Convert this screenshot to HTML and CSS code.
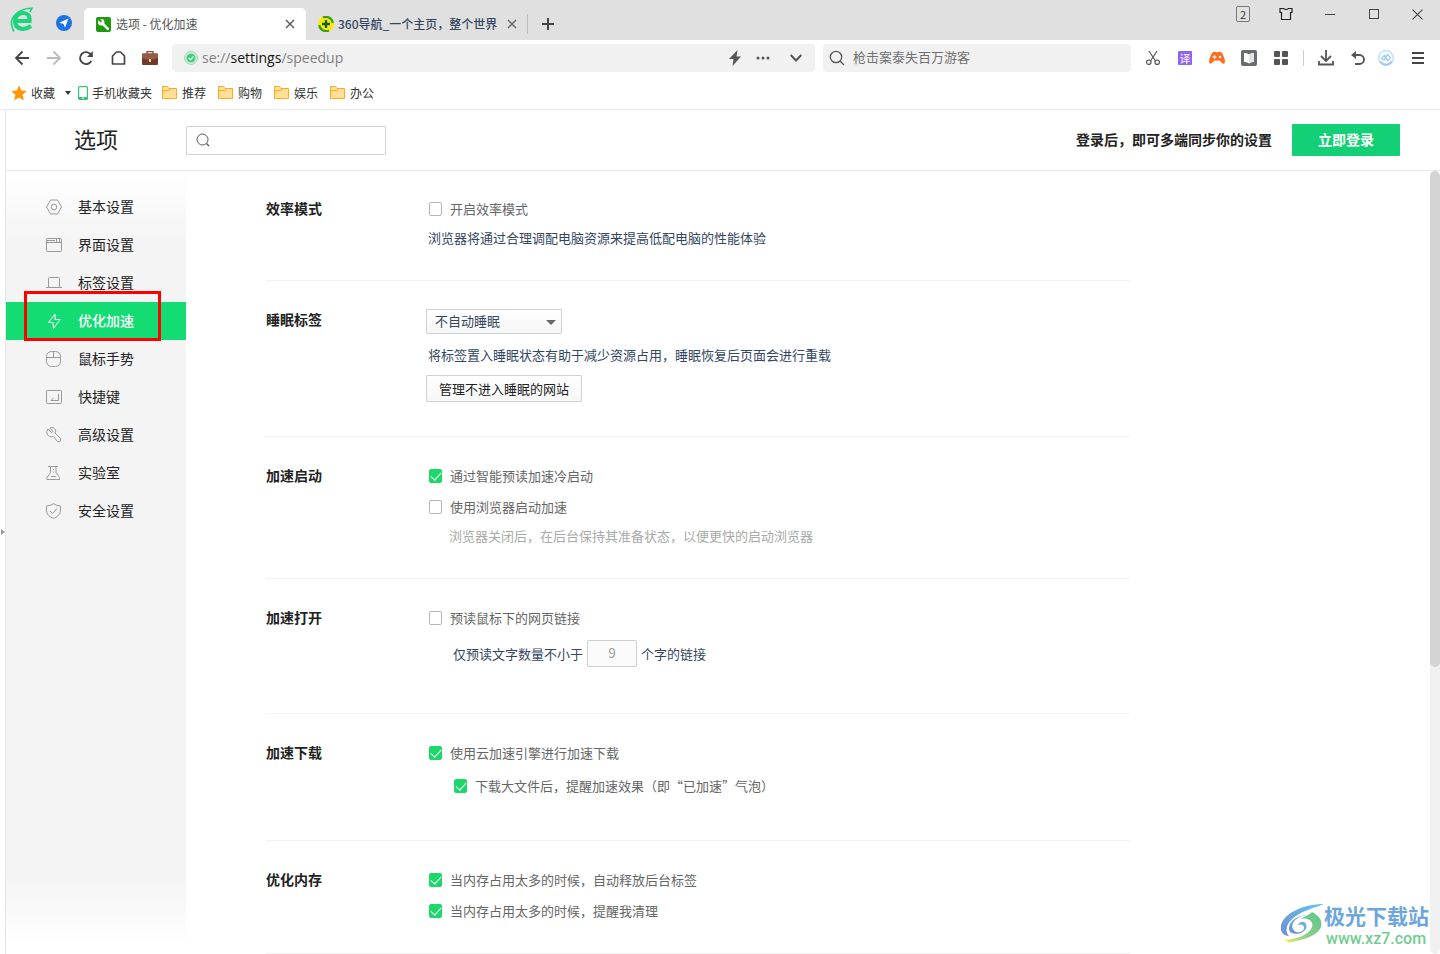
FILE: index.html
```html
<!DOCTYPE html>
<html lang="zh-CN">
<head>
<meta charset="utf-8">
<title>选项 - 优化加速</title>
<link rel="stylesheet" href="styles.css">
</head>
<body>
<div class="tabbar">
  <svg class="logo" viewBox="0 0 24 26" width="24" height="26"><g fill="none" stroke="#1bd47b"><path d="M6 14H19.500C20 8.500 17.500 6 13 6C8.500 6 5 9.500 5 14.500C5.500 22.500 14 24 21 19" stroke-width="4.200"/><path d="M1.500 14C4 6.500 12 1 22 1.200L20 5M1.500 14C1 18 2 21 4 24.500" stroke-width="1.600"/></g></svg>
  <svg class="nav-badge" viewBox="0 0 16 16" width="16" height="16"><circle cx="8" cy="8" r="8" fill="#1a73e8"/><path d="M12.500 3.500L9 12.800L7.500 8.900L3.300 7.800Z" fill="#fff"/></svg>
  <div class="tab tab-active">
    <svg viewBox="0 0 15 15" width="15" height="15"><rect width="15" height="15" rx="2" fill="#21990f"/><path d="M6.500 6.500L11.800 11.800" stroke="#fff" stroke-width="2.600" stroke-linecap="round"/><circle cx="5.200" cy="5.200" r="3.200" fill="#fff"/><path d="M1.500 2.500L3 1L6 4L5 5.500Z" fill="#21990f"/></svg>
    <span class="tab-title">选项 - 优化加速</span>
    <button class="plain" aria-label="关闭标签"><svg viewBox="0 0 10 10" width="10" height="10"><path d="M1 1L9 9M9 1L1 9" stroke="#555" stroke-width="1.400"/></svg></button>
  </div>
  <div class="tab tab-idle">
    <svg viewBox="0 0 16 16" width="16" height="16"><circle cx="8" cy="8" r="8" fill="#ffe711"/><path d="M5 1.500A7 7 0 0 1 14.800 7M11 14.500A7 7 0 0 1 1.200 9" fill="none" stroke="#31a31c" stroke-width="2.200"/><path d="M8 4V12M4 8H12" stroke="#125f12" stroke-width="2.300"/></svg>
    <span class="tab-title">360导航_一个主页，整个世界</span>
    <button class="plain" aria-label="关闭标签"><svg viewBox="0 0 10 10" width="10" height="10"><path d="M1 1L9 9M9 1L1 9" stroke="#666" stroke-width="1.400"/></svg></button>
  </div>
  <button class="plain new-tab" aria-label="新建标签"><svg viewBox="0 0 12 12" width="12" height="12"><path d="M6 0V12M0 6H12" stroke="#444" stroke-width="2"/></svg></button>
  <div class="window-controls">
    <button class="plain count">2</button>
    <button class="plain" aria-label="皮肤"><svg viewBox="0 0 14 14" width="14" height="14"><path d="M1 1.500H4.500Q7 3.500 9.500 1.500H13V5.500H11.500V12.500H2.500V5.500H1Z" fill="none" stroke="#222" stroke-width="1.200"/></svg></button>
    <button class="plain" aria-label="最小化"><svg viewBox="0 0 10 10" width="10" height="10"><path d="M0 5.500H10" stroke="#444"/></svg></button>
    <button class="plain" aria-label="最大化"><svg viewBox="0 0 10 10" width="10" height="10"><rect x=".5" y=".5" width="9" height="9" fill="none" stroke="#444"/></svg></button>
    <button class="plain" aria-label="关闭"><svg viewBox="0 0 10 10" width="11" height="11"><path d="M.5 .5L9.500 9.500M9.500 .5L.5 9.500" stroke="#444"/></svg></button>
  </div>
</div>

<div class="toolbar">
  <div class="nav-buttons">
    <button class="plain" aria-label="后退"><svg viewBox="0 0 16 16" width="16" height="16"><path d="M15 8H2M8.500 1.500L2 8L8.500 14.500" fill="none" stroke="#444" stroke-width="1.800"/></svg></button>
    <button class="plain" aria-label="前进"><svg viewBox="0 0 16 16" width="16" height="16"><path d="M1 8H14M7.500 1.500L14 8L7.500 14.500" fill="none" stroke="#bbb" stroke-width="1.800"/></svg></button>
    <button class="plain" aria-label="刷新"><svg viewBox="0 0 16 16" width="16" height="16"><path d="M13.300 11A6 6 0 1 1 13 4.700" fill="none" stroke="#444" stroke-width="1.900"/><path d="M14.800 1V7H9Z" fill="#444"/></svg></button>
    <button class="plain" aria-label="主页"><svg viewBox="0 0 16 16" width="16" height="16"><path d="M2.500 6L6.500 2H10.500L14.500 6V14H2.500Z" fill="none" stroke="#444" stroke-width="1.700" stroke-linejoin="round"/></svg></button>
    <button class="plain" aria-label="工具箱"><svg viewBox="0 0 16 16" width="16" height="16"><path d="M5 4V1.700H11V4" fill="none" stroke="#8c4a3a" stroke-width="1.300"/><rect y="3.500" width="16" height="11.500" rx="1" fill="#71382c"/><path d="M0 4.500Q0 3.500 1 3.500H15Q16 3.500 16 4.500V8Q8 11 0 8Z" fill="#98594a"/><rect x="7" y="9" width="2" height="3" fill="#ffd878"/></svg></button>
  </div>
  <div class="address">
    <svg viewBox="0 0 14 14" width="14" height="14"><circle cx="7" cy="7" r="6.300" fill="none" stroke="#75dda0"/><circle cx="7" cy="7" r="4.600" fill="#45cf7b"/><path d="M4.800 7L6.500 8.700L9.500 5.500" fill="none" stroke="#fff" stroke-width="1.200"/></svg>
    <span class="url">se://<b>settings</b>/speedup</span>
    <button class="plain" aria-label="极速模式"><svg viewBox="0 0 12 16" width="12" height="16"><path d="M8.500 0L0 9H4.500L3.500 16L12 6.500H7.500Z" fill="#555"/></svg></button>
    <button class="plain" aria-label="更多"><svg viewBox="0 0 14 4" width="14" height="4"><g fill="#555"><circle cx="2" cy="2" r="1.500"/><circle cx="7" cy="2" r="1.500"/><circle cx="12" cy="2" r="1.500"/></g></svg></button>
    <button class="plain" aria-label="展开"><svg viewBox="0 0 12 8" width="12" height="8"><path d="M.7 1L6 6.500L11.300 1" fill="none" stroke="#555" stroke-width="2"/></svg></button>
  </div>
  <label class="websearch">
    <svg viewBox="0 0 16 16" width="16" height="16"><circle cx="7" cy="7" r="5.700" fill="none" stroke="#555" stroke-width="1.300"/><path d="M11 11L15 15" stroke="#555" stroke-width="1.300"/></svg>
    <input type="text" placeholder="枪击案泰失百万游客" aria-label="搜索">
  </label>
  <div class="tools">
    <button class="plain" aria-label="截图"><svg viewBox="0 0 16 16" width="16" height="16"><g fill="none" stroke="#555" stroke-width="1.200"><path d="M4 1L10.500 11M12 1L5.500 11"/><circle cx="3.800" cy="12.200" r="2.200"/><circle cx="12.200" cy="12.200" r="2.200"/></g></svg></button>
    <button class="plain translate">译</button>
    <button class="plain" aria-label="游戏"><svg viewBox="0 0 16 14" width="16" height="14"><path d="M3 2Q5 0 8 1.500Q11 0 13 2Q16 7 16 11Q15.500 14 13 12L10.500 9.500H5.500L3 12Q.5 14 0 11Q0 7 3 2Z" fill="#fb6e1c"/><path d="M5.500 4V8M3.500 6H7.500" stroke="#fff" stroke-width="1.200"/><circle cx="11" cy="6" r="1.200" fill="#fff"/></svg></button>
    <button class="plain" aria-label="阅读"><svg viewBox="0 0 16 16" width="16" height="16"><rect width="16" height="16" rx="2" fill="#696b72"/><path d="M3 3Q6 2.500 8 4.500Q10 2.500 13 3V12Q10 11.500 8 13.500Q6 11.500 3 12Z" fill="#fff"/><path d="M8 4.500Q10 2.500 13 3V12Q10 11.500 8 13.500Z" fill="#e3e3e5"/></svg></button>
    <button class="plain" aria-label="扩展"><svg viewBox="0 0 14 14" width="14" height="14"><g fill="#555"><rect width="6" height="6" rx="1"/><rect x="8" width="6" height="6" rx="1"/><rect y="8" width="6" height="6" rx="1"/><rect x="8" y="8" width="6" height="6" rx="1"/></g></svg></button>
    <span class="tool-divider"></span>
    <button class="plain" aria-label="下载"><svg viewBox="0 0 16 16" width="16" height="16"><path d="M8 0V11M3 6L8 11L13 6M1 11V14.500H15V11" fill="none" stroke="#555" stroke-width="1.800"/></svg></button>
    <button class="plain" aria-label="恢复"><svg viewBox="0 0 16 16" width="16" height="16"><path d="M3 5H9.500A4.500 4.500 0 0 1 9.500 14H5" fill="none" stroke="#555" stroke-width="1.900"/><path d="M1 5L6 1V9Z" fill="#555"/></svg></button>
    <button class="plain helper" aria-label="助手"><svg viewBox="0 0 16 16" width="16" height="16"><circle cx="8" cy="8" r="7.300" fill="#fff" stroke="#b5def8" stroke-width="1.300"/><path d="M2 11.500Q8 18 14 11.500" fill="none" stroke="#a9c5f8" stroke-width="2"/><path d="M3.500 8.500L6.500 5.500L9.500 10.500L12.500 7.500L9.500 4.500L6 10Z" fill="none" stroke="#9ccdf7" stroke-width="1.400"/></svg></button>
    <button class="plain" aria-label="菜单"><svg viewBox="0 0 12 12" width="12" height="12"><path d="M0 1H12M0 6H12M0 11H12" stroke="#444" stroke-width="2"/></svg></button>
  </div>
</div>

<nav class="bookmarks">
  <a href="#" class="bookmark favorites"><svg viewBox="0 0 16 16" width="16" height="16"><path d="M8 .5L10.300 5.600L15.700 6.100L11.600 9.800L12.900 15.300L8 12.400L3.100 15.300L4.400 9.800L.3 6.100L5.700 5.600Z" fill="#ff9500"/></svg>收藏<span class="caret"></span></a>
  <a href="#" class="bookmark phone"><svg viewBox="0 0 10 14" width="10" height="14"><rect x=".6" y=".6" width="8.800" height="12.800" rx="1" fill="#fff" stroke="#3cc276" stroke-width="1.200"/><path d="M1 11H9V13H1Z" fill="#3cc276"/><path d="M4 12H6" stroke="#fff"/></svg>手机收藏夹</a>
  <a href="#" class="bookmark"><svg viewBox="0 0 15 13" width="15" height="13"><path d="M.5 12.500V.5H5.500L7 2.500H14.500V12.500Z" fill="#ffe09a" stroke="#ffab1c"/><path d="M1 4.500H7L8 3" fill="none" stroke="#ffab1c"/></svg>推荐</a>
  <a href="#" class="bookmark"><svg viewBox="0 0 15 13" width="15" height="13"><path d="M.5 12.500V.5H5.500L7 2.500H14.500V12.500Z" fill="#ffe09a" stroke="#ffab1c"/><path d="M1 4.500H7L8 3" fill="none" stroke="#ffab1c"/></svg>购物</a>
  <a href="#" class="bookmark"><svg viewBox="0 0 15 13" width="15" height="13"><path d="M.5 12.500V.5H5.500L7 2.500H14.500V12.500Z" fill="#ffe09a" stroke="#ffab1c"/><path d="M1 4.500H7L8 3" fill="none" stroke="#ffab1c"/></svg>娱乐</a>
  <a href="#" class="bookmark"><svg viewBox="0 0 15 13" width="15" height="13"><path d="M.5 12.500V.5H5.500L7 2.500H14.500V12.500Z" fill="#ffe09a" stroke="#ffab1c"/><path d="M1 4.500H7L8 3" fill="none" stroke="#ffab1c"/></svg>办公</a>
</nav>

<div class="stage">
  <button class="plain side-handle" aria-label="展开侧栏"><span></span></button>
  <div class="page">
    <header class="header">
      <h1>选项</h1>
      <label class="find">
        <svg viewBox="0 0 14 14" width="14" height="14"><circle cx="6.500" cy="6.500" r="5.500" fill="none" stroke="#555"/><path d="M10.500 10.500L13 13" stroke="#555" stroke-width="1.200"/></svg>
        <input type="text" aria-label="搜索设置">
      </label>
      <span class="login-tip">登录后，即可多端同步你的设置</span>
      <button class="login">立即登录</button>
    </header>
    <div class="body">
      <nav class="sidebar">
        <a href="#"><svg viewBox="0 0 16 16"><path d="M4.500 1H11.500L15.500 8L11.500 15H4.500L.5 8Z"/><circle cx="8" cy="8" r="2.800"/></svg>基本设置</a>
        <a href="#"><svg viewBox="0 0 16 16"><rect x=".5" y="1.500" width="15" height="13" rx="1"/><path d="M.5 5.500H15.500M1 3.500H9M10.500 2V5M13.500 2V5"/></svg>界面设置</a>
        <a href="#"><svg viewBox="0 0 16 16"><path d="M2.500 12.500V3.500Q2.500 2.500 3.500 2.500H12.500Q13.500 2.500 13.500 3.500V12.500M0 12.500H16"/></svg>标签设置</a>
        <a href="#" class="current"><svg viewBox="0 0 16 16"><path d="M9 1L2.500 9.500H7L7.500 15.500L14 6.500H9Z"/></svg>优化加速<span class="highlight"></span></a>
        <a href="#"><svg viewBox="0 0 16 16"><rect x=".5" y=".5" width="14" height="15" rx="5"/><path d="M.5 6.500H14.500M7.500 .5V6.500"/></svg>鼠标手势</a>
        <a href="#"><svg viewBox="0 0 16 16"><rect x=".5" y="1.500" width="15" height="13" rx="1"/><path d="M12.500 5V11.500H5L7.500 9"/></svg>快捷键</a>
        <a href="#"><svg viewBox="0 0 16 16"><path d="M2 2L5.500 5.500L7 4.500L4 1Q8-.5 9.500 3Q10 4.500 9 6L14.500 11.500Q15.500 15.500 11.500 14.500L7.500 9.500Q3 10.500 1 7Q0 4.500 2 2Z"/></svg>高级设置</a>
        <a href="#"><svg viewBox="0 0 16 16"><path d="M2 1.500H12M4.500 2V7.500L1 12.500V14.500H13.500V12.500L10 7.500V2M7.500 4V5M7.500 6.500V7.500M5 11.500H10"/></svg>实验室</a>
        <a href="#"><svg viewBox="0 0 16 16"><path d="M7.500 .7Q11 3 14.500 3V8Q14 13 7.500 15.400Q1 13 .5 8V3Q4 3 7.500 .7ZM4 8L6.500 10.500L11 5.500"/></svg>安全设置</a>
      </nav>
      <main class="settings">
        <section class="section">
          <h2>效率模式</h2>
          <div class="controls">
            <label class="check"><input type="checkbox">开启效率模式</label>
            <p class="desc near">浏览器将通过合理调配电脑资源来提高低配电脑的性能体验</p>
          </div>
        </section>
        <section class="section sleep">
          <h2>睡眠标签</h2>
          <div class="controls">
            <div class="select-wrap"><select aria-label="睡眠标签"><option>不自动睡眠</option></select></div>
            <p class="desc">将标签置入睡眠状态有助于减少资源占用，睡眠恢复后页面会进行重载</p>
            <button class="manage">管理不进入睡眠的网站</button>
          </div>
        </section>
        <section class="section">
          <h2>加速启动</h2>
          <div class="controls">
            <label class="check"><input type="checkbox" checked>通过智能预读加速冷启动</label>
            <label class="check"><input type="checkbox">使用浏览器启动加速</label>
            <p class="hint near">浏览器关闭后，在后台保持其准备状态，以便更快的启动浏览器</p>
          </div>
        </section>
        <section class="section open">
          <h2>加速打开</h2>
          <div class="controls roomy">
            <label class="check"><input type="checkbox">预读鼠标下的网页链接</label>
            <label class="count-row">仅预读文字数量不小于<input type="text" value="9" disabled>个字的链接</label>
          </div>
        </section>
        <section class="section download">
          <h2>加速下载</h2>
          <div class="controls roomy">
            <label class="check"><input type="checkbox" checked>使用云加速引擎进行加速下载</label>
            <label class="check nested"><input type="checkbox" checked>下载大文件后，提醒加速效果（即“已加速”气泡）</label>
          </div>
        </section>
        <section class="section">
          <h2>优化内存</h2>
          <div class="controls">
            <label class="check"><input type="checkbox" checked>当内存占用太多的时候，自动释放后台标签</label>
            <label class="check"><input type="checkbox" checked>当内存占用太多的时候，提醒我清理</label>
          </div>
        </section>
      </main>
      <div class="scrollbar"><div class="thumb"></div></div>
    </div>
  </div>
</div>

<div class="watermark">
  <svg viewBox="0 0 44 40" width="44" height="40">
    <defs>
      <linearGradient id="blue" x1="1" y1="0" x2="0" y2="1"><stop offset="0" stop-color="#62c5ee"/><stop offset="1" stop-color="#6f8fd2"/></linearGradient>
      <linearGradient id="green" x1="1" y1="0" x2="0" y2="1"><stop offset="0" stop-color="#5bc58b"/><stop offset=".6" stop-color="#8fd08a"/><stop offset="1" stop-color="#f0ee5a"/></linearGradient>
    </defs>
    <path d="M44 0C24 0 3 9 1 22C0 28 4 32 9 32C3 25 8 13 28 6C34 3 40 2 44 0Z" fill="url(#blue)"/>
    <path d="M29 11C18 11 10 19 13 25C16 31 25 28 24 23C23 20 19 20 18 22C18 18 24 16 26 20C29 27 18 33 10 28C6 20 16 10 29 11Z" fill="url(#blue)"/>
    <path d="M32 8C30 10 25 13 20 15C28 13 34 17 32 23C29 31 17 35 4 36C9 37 9 38 4 39C20 37 37 33 41 23C43 16 38 11 32 8Z" fill="url(#green)"/>
  </svg>
  <div class="watermark-text"><strong>极光下载站</strong><span>www.xz7.com</span></div>
</div>
</body>
</html>
```

FILE: styles.css
```css
* { box-sizing: border-box; }

body {
  margin: 0;
  height: 100vh;
  display: flex;
  flex-direction: column;
  overflow: hidden;
  background: #fff;
  color: #222;
  font: 13px/22px "Noto Sans CJK SC", sans-serif;
}

h1, h2, p { margin: 0; }
a { color: inherit; text-decoration: none; }
svg { display: block; flex: none; }
button, input, select { font: inherit; }

.plain {
  display: flex;
  align-items: center;
  justify-content: center;
  padding: 0;
  border: 0;
  background: none;
}

/* Tabs */
.tabbar {
  flex: none;
  display: flex;
  align-items: flex-end;
  height: 40px;
  background: #e0e0e0;
  font-size: 12px;
}
.logo { margin: 0 22px 7px 10px; }
.nav-badge { margin: 0 12px 9px 0; }
.tab {
  display: flex;
  align-items: center;
  gap: 5px;
  height: 32px;
}
.tab-title { flex: 1; white-space: nowrap; }
.tab-active {
  width: 222px;
  padding: 0 11px 0 12px;
  border-radius: 5px 5px 0 0;
  background: #fff;
  color: #555;
}
.tab-idle {
  width: 222px;
  padding: 0 11px 0 12px;
  gap: 4px;
  color: #34465f;
  font-weight: 500;
  background: linear-gradient(#bbb, #bbb) right 6px / 1px 20px no-repeat;
}
.new-tab { height: 32px; margin-left: 14px; }
.window-controls {
  display: flex;
  align-self: flex-start;
  gap: 15px;
  height: 28px;
  margin-left: auto;
  padding-right: 8px;
}
.window-controls .plain { width: 29px; }
.window-controls .count {
  align-self: center;
  width: 14px;
  height: 16px;
  margin-right: 6px;
  border: 1px solid #777;
  border-radius: 2px;
  color: #333;
  font-size: 11px;
  line-height: 14px;
}

/* Toolbar */
.toolbar {
  flex: none;
  display: flex;
  align-items: center;
  height: 36px;
}
.nav-buttons {
  display: flex;
  gap: 16px;
  padding: 0 14px;
}
.address, .websearch {
  display: flex;
  align-items: center;
  height: 28px;
  border-radius: 4px;
  background: #f1f1f1;
}
.address {
  flex: 643;
  gap: 4px;
  padding: 0 13px 0 12px;
}
.address .plain { margin-left: 11px; }
.address .plain:last-child { margin-left: 16px; }
.url {
  flex: 1;
  color: #808080;
  font: 14px/22px "Open Sans", sans-serif;
}
.url b { color: #111; font-weight: 400; }
.websearch {
  flex: 308;
  gap: 8px;
  margin-left: 8px;
  padding: 0 6px;
}
.websearch input {
  flex: 1;
  min-width: 0;
  padding: 0 0 2px;
  border: 0;
  background: none;
}
.websearch input::placeholder { color: #707070; opacity: 1; }
.tools {
  display: flex;
  align-items: center;
  gap: 16px;
  padding: 0 14px;
}
.tools .plain { width: 16px; }
.tools .translate {
  width: 14px;
  height: 14px;
  margin: 0 1px;
  border-radius: 1px;
  background: #9163f5;
  color: #fff;
  font-size: 11px;
  line-height: 14px;
}
.tools .helper { margin-left: -4px; }
.tool-divider {
  width: 1px;
  height: 16px;
  margin: 0 -2px;
  background: #ccc;
}

/* Bookmarks */
.bookmarks {
  flex: none;
  display: flex;
  align-items: center;
  gap: 12px;
  height: 34px;
  padding: 0 11px;
  border-bottom: 1px solid #ebebeb;
  color: #333;
  font-size: 12px;
}
.bookmark {
  display: flex;
  align-items: center;
  gap: 5px;
}
.favorites { gap: 4px; margin-right: -5px; }
.phone { gap: 4px; margin-right: -2px; }
.caret {
  margin-left: 6px;
  border: 3px solid transparent;
  border-top: 4px solid #333;
  border-bottom: 0;
}

/* Settings page */
.stage {
  flex: 1;
  display: flex;
  min-height: 0;
}
.side-handle { width: 5px; }
.side-handle span {
  border: 3px solid transparent;
  border-left: 4px solid #999;
  border-right: 0;
}
.page {
  flex: 1;
  display: flex;
  flex-direction: column;
  min-width: 0;
  border-left: 1px solid #e5e5e5;
}
.header {
  flex: none;
  display: flex;
  align-items: center;
  height: 61px;
  padding-right: 40px;
  border-bottom: 1px solid #e8e8e8;
}
.header h1 {
  width: 180px;
  padding-bottom: 4px;
  text-align: center;
  font-size: 22px;
  font-weight: 400;
  line-height: 32px;
}
.find {
  display: flex;
  align-items: center;
  gap: 8px;
  width: 200px;
  height: 29px;
  padding: 0 9px;
  border: 1px solid #d2d2d2;
  border-radius: 1px;
}
.find input {
  flex: 1;
  min-width: 0;
  padding: 0;
  border: 0;
}
.login-tip {
  margin-left: auto;
  padding-bottom: 2px;
  font-size: 14px;
  font-weight: 700;
}
.login {
  width: 108px;
  height: 32px;
  margin-left: 20px;
  padding: 0 0 2px;
  border: 0;
  border-radius: 1px;
  background: #13cf75;
  color: #fff;
  font-size: 14px;
  font-weight: 700;
}
.body {
  flex: 1;
  display: flex;
  min-height: 0;
}
.sidebar {
  flex: none;
  width: 180px;
  padding-top: 17px;
  background: linear-gradient(#fff, #f4f4f4 72px, #f4f4f4 calc(100% - 80px), #fff calc(100% - 8px));
  font-size: 14px;
  line-height: 20px;
}
.sidebar a {
  position: relative;
  display: flex;
  align-items: center;
  gap: 16px;
  height: 38px;
  padding: 0 0 2px 40px;
}
.sidebar svg {
  width: 16px;
  height: 16px;
  margin-top: 2px;
  fill: none;
  stroke: #999;
}
.sidebar .current {
  background: #13dc72;
  color: #fff;
  font-weight: 500;
}
.sidebar .current svg { stroke: #fff; }
.highlight {
  position: absolute;
  top: -11px;
  left: 18px;
  width: 137px;
  height: 50px;
  border: 3px solid #f00;
}

.settings {
  flex: 1;
  min-width: 0;
  padding: 0 300px 0 80px;
  overflow: hidden;
}
.section {
  display: grid;
  grid-template-columns: 160px 1fr;
  padding: 28px 0 31px;
  border-bottom: 1px solid #f2f2f2;
}
.section:first-child { padding-top: 27px; }
.sleep { padding-bottom: 34px; }
.open { padding-bottom: 46px; }
.download { padding-bottom: 43px; }
.section h2 {
  font-size: 14px;
  font-weight: 700;
  line-height: 20px;
}
.controls {
  display: flex;
  flex-direction: column;
  align-items: flex-start;
  gap: 9px;
}
.controls.roomy { gap: 11px; }
.check {
  display: flex;
  align-items: center;
  gap: 8px;
  padding-left: 3px;
  color: #666;
}
.check.nested { padding-left: 28px; }
.check input {
  position: relative;
  appearance: none;
  width: 13px;
  height: 14px;
  margin: 0;
  border: 1px solid #b5b5b5;
  border-radius: 2px;
  background: #fff;
}
.check input:checked {
  border-color: #1bd968;
  background: #1bd968;
}
.check input:checked::after {
  content: "";
  position: absolute;
  top: 0;
  left: 3px;
  width: 5px;
  height: 9px;
  border: solid #fff;
  border-width: 0 1px 1px 0;
  transform: rotate(42deg);
}
.desc { padding-left: 2px; color: #34465f; }
.hint { padding-left: 23px; color: #aaa; }
.near { margin-top: -2px; }
.select-wrap {
  position: relative;
  margin-bottom: 1px;
}
.select-wrap::after {
  content: "";
  position: absolute;
  top: 11px;
  right: 6px;
  border: 5px solid transparent;
  border-top: 5px solid #666;
  border-bottom: 0;
  pointer-events: none;
}
select {
  display: block;
  appearance: none;
  width: 136px;
  height: 25px;
  padding: 0 8px 2px;
  border: 1px solid #d0d0d0;
  border-radius: 1px;
  background: linear-gradient(#fff, #f6f6f6);
  color: #34465f;
}
.manage {
  width: 156px;
  height: 27px;
  padding: 0;
  border: 1px solid #d0d0d0;
  border-radius: 1px;
  background: linear-gradient(#fff, #f6f6f6);
  color: #222;
}
.count-row {
  display: flex;
  align-items: center;
  gap: 4px;
  padding-left: 27px;
  color: #34465f;
}
.count-row input {
  width: 50px;
  height: 27px;
  padding: 0 0 2px;
  border: 1px solid #d0d0d0;
  border-radius: 1px;
  background: #fafafa;
  color: #999;
  text-align: center;
}
.scrollbar {
  flex: none;
  width: 10px;
  border-radius: 5px;
  background: #f0f0f0;
}
.thumb {
  height: 63.4%;
  border-radius: 5px;
  background: #d4d4d4;
}

.watermark {
  position: absolute;
  right: 11px;
  bottom: 6px;
  display: flex;
  align-items: center;
}
.watermark-text {
  display: flex;
  flex-direction: column;
  color: #6ca6dc;
}
.watermark-text strong { font-size: 21px; line-height: 30px; }
.watermark-text span {
  padding-left: 2px;
  color: #72cd92;
  font: 500 16px/18px Roboto, sans-serif;
}
```
